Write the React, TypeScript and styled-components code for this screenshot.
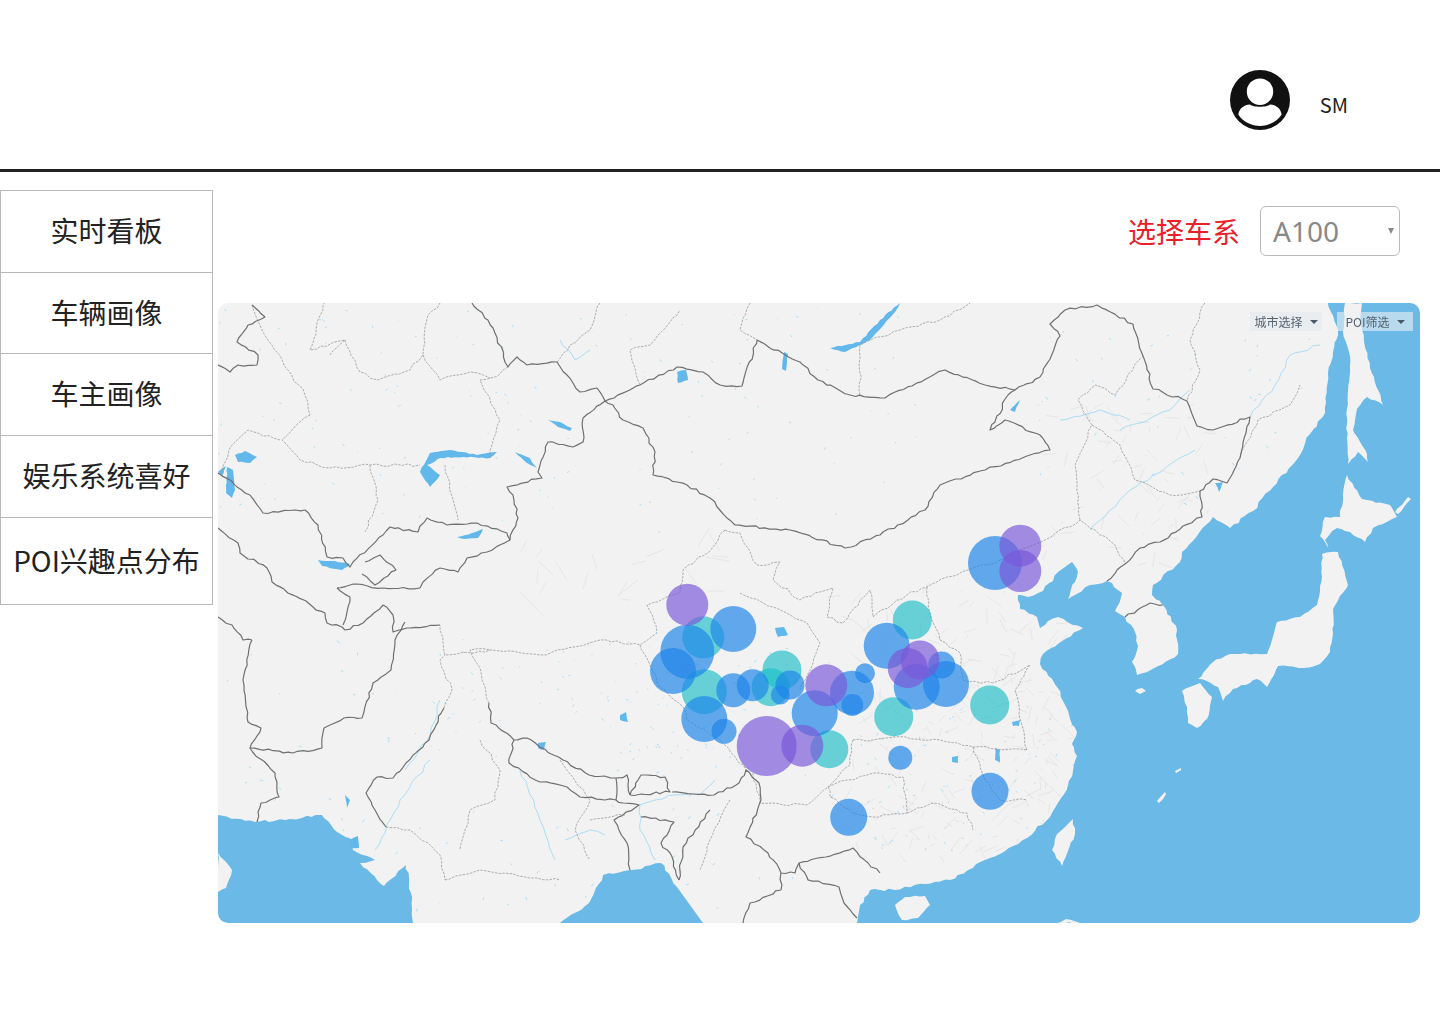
import styled, { createGlobalStyle } from "styled-components"

const GlobalStyle = createGlobalStyle`
    html, body {
        margin: 0;
        padding: 0;
        background: #fff;
        font-family: "Noto Sans CJK SC", "Noto Sans", sans-serif;
    }
`

const Page = styled.div`
    width: 1440px;
    height: 1024px;
    overflow: hidden;
`

const Header = styled.header`
    height: 169px;
    border-bottom: 3px solid #222;
    display: flex;
    align-items: center;
    justify-content: flex-end;
    gap: 30px;
    padding: 0 92px 0 0;
    box-sizing: content-box;
    margin-bottom: 18px;
`

const Avatar = styled.svg`
    width: 60px;
    height: 60px;
    margin-top: 31px;
`

const UserName = styled.span`
    font-size: 20px;
    color: #222;
    margin-top: 39px;
`

const Main = styled.div`
    display: flex;
`

const SideNav = styled.nav`
    width: 213px;
    flex-shrink: 0;
    display: flex;
    flex-direction: column;
`

const NavItem = styled.a<{ $height: number }>`
    height: ${(p) => p.$height}px;
    box-sizing: border-box;
    border: 1px solid #b8b8b8;
    border-top-width: 0;
    padding-bottom: 3px;
    display: flex;
    align-items: center;
    justify-content: center;
    font-size: 28px;
    color: #222;
    white-space: nowrap;

    &:first-child {
        border-top-width: 1px;
    }
`

const Content = styled.section`
    flex: 1;
    padding: 16px 20px 0 5px;
`

const FilterRow = styled.div`
    display: flex;
    align-items: center;
    justify-content: flex-end;
    gap: 20px;
    padding-right: 20px;
    margin-bottom: 47px;
`

const FilterLabel = styled.label`
    font-size: 28px;
    color: #e8202a;
    line-height: 50px;
`

const SelectBox = styled.div`
    position: relative;
    width: 140px;
    height: 50px;

    &::after {
        content: "";
        position: absolute;
        right: 6px;
        top: 22px;
        border-left: 3px solid transparent;
        border-right: 3px solid transparent;
        border-top: 6px solid #888;
    }
`

const Select = styled.select`
    appearance: none;
    width: 100%;
    height: 100%;
    box-sizing: border-box;
    border: 1px solid #bbb;
    border-radius: 6px;
    background: #fff;
    padding: 0 0 0 12px;
    font-family: "Noto Sans", sans-serif;
    font-size: 28px;
    color: #888;
`

const MapFrame = styled.div`
    position: relative;
    width: 1202px;
    height: 620px;
    border-radius: 10px;
    overflow: hidden;
    background: #f2f2f2;
`

const MapSvg = styled.svg`
    display: block;
    width: 1202px;
    height: 620px;
`

const MapControl = styled.div<{ $right: number; $width: number; $strong?: boolean }>`
    position: absolute;
    top: 9px;
    right: ${(p) => p.$right}px;
    width: ${(p) => p.$width}px;
    height: 19px;
    display: flex;
    align-items: center;
    justify-content: center;
    gap: 7px;
    font-size: 12px;
    color: #53616e;
    background: ${(p) => (p.$strong ? "rgba(236,240,244,.6)" : "rgba(228,233,238,.55)")};
    filter: blur(0.45px);

    &::after {
        content: "";
        border-left: 4.5px solid transparent;
        border-right: 4.5px solid transparent;
        border-top: 4.5px solid #4a5a68;
    }
`

const Sea = styled.polygon`
    fill: #6bb9e6;
`

const Land = styled.polygon`
    fill: #f2f2f2;
`

const Lake = styled.polygon`
    fill: #62b8ea;
`

const Line = styled.polyline<{ $kind: "border" | "region" | "river" | "road" }>`
    fill: none;
    stroke-linejoin: round;
    stroke: ${(p) =>
        p.$kind === "border" ? "#707070" : p.$kind === "region" ? "#9a9a9a" : p.$kind === "river" ? "#9ad5f5" : "#e2e2e2"};
    stroke-width: ${(p) => (p.$kind === "border" ? 1.2 : 0.8)};
    stroke-dasharray: ${(p) => (p.$kind === "region" ? "2.5 1.2" : "none")};
`

const Bubble = styled.circle<{ $tone: "blue" | "purple" | "teal" }>`
    fill: ${(p) => (p.$tone === "blue" ? "#1c85e9" : p.$tone === "purple" ? "#7a58d8" : "#20c0c8")};
    fill-opacity: 0.68;
`

const navItems = [
    { label: "实时看板", height: 83 },
    { label: "车辆画像", height: 81 },
    { label: "车主画像", height: 82 },
    { label: "娱乐系统喜好", height: 82 },
    { label: "POI兴趣点分布", height: 87 },
]

const seas = [
    // yellow sea, east china sea, sea of japan, pacific
    "1328,303 1338,330 1333,352 1328,373 1325,413 1310,434 1295,462 1273,487 1253,511 1230,528 1213,517 1197,536 1182,552 1180,562 1153,585 1152,595 1163,605 1177,630 1178,654 1163,664 1137,675 1132,662 1138,646 1135,632 1125,617 1115,611 1122,593 1112,583 1107,581 1090,585 1068,599 1078,572 1072,562 1058,572 1043,591 1028,597 1018,595 1020,609 1037,617 1040,628 1058,617 1083,628 1067,638 1043,654 1040,664 1057,687 1068,711 1077,732 1072,744 1077,756 1068,785 1050,817 1027,838 1000,854 985,860 950,880 925,884 895,890 870,890 860,905 857,923 1420,923 1420,303",
    // arabian sea
    "218,815 255,822 290,819 322,815 337,832 353,840 353,850 375,860 360,863 384,886 406,865 411,893 413,923 218,923",
    // bay of bengal
    "560,923 589,903 603,875 630,870 661,863 677,887 703,923",
]

const islands = [
    "1345,303 1362,303 1360,320 1370,368 1383,405 1367,397 1357,409 1353,430 1367,454 1368,462 1358,452 1348,464 1347,438 1347,409 1350,356 1343,332",
    "1347,475 1362,499 1390,505 1397,517 1373,528 1365,542 1350,532 1337,528 1325,540 1328,548 1320,536 1325,517 1340,517 1343,495",
    "1322,554 1338,552 1348,585 1333,609 1333,634 1330,652 1320,664 1303,668 1278,666 1267,687 1257,679 1250,683 1233,689 1223,701 1218,687 1207,681 1198,679 1213,662 1230,654 1267,654 1277,622 1300,617 1317,605 1322,577",
    "1182,691 1200,683 1212,697 1207,719 1197,728 1188,723 1187,707",
    "1073,819 1075,834 1062,866 1052,850 1057,834",
    "895,905 905,897 925,896 930,905 918,918 902,920",
    "1058,923 1066,919 1080,923",
    "1135,691 1142,688 1146,691 1140,694",
    "218,853 232,870 226,888 218,892",
    "1395,512 1408,497 1411,499 1398,514",
    "1157,801 1165,792 1166,794 1159,803",
    "1175,771 1181,768 1181,770 1176,773",
]

const lakes = [
    "420,472 430,453 450,450 477,455 497,452 490,458 463,457 440,458 427,465 440,475 430,487 423,477",
    "515,452 530,458 537,468 527,463",
    "548,420 560,422 572,428 570,431 558,427",
    "457,537 472,533 483,529 478,538 465,539",
    "227,467 233,470 235,490 232,498 226,493",
    "235,455 245,451 257,457 250,463 238,462",
    "218,472 226,466 222,476",
    "830,348 860,342 880,320 900,303 895,312 870,340 845,352",
    "677,372 686,370 688,380 678,383",
    "784,352 788,354 786,371 782,369",
    "775,628 784,627 788,635 778,637",
    "1010,410 1020,400 1015,412",
    "1215,483 1223,482 1219,492",
    "995,748 1000,750 1000,762 995,760",
    "952,757 958,756 958,763 952,762",
    "1012,722 1020,720 1019,726 1013,726",
    "318,560 335,561 350,564 342,570 322,566",
    "345,795 350,800 347,808",
    "350,840 358,836 359,848 352,848",
    "538,743 546,742 544,750 538,748",
    "620,715 626,712 628,722 620,720",
]

const borders = [
    "218,365 230,372 238,365 257,365 258,355 237,342 248,325 265,317 252,305",
    "472,303 493,328 508,367 517,357 527,365 557,362 567,375 580,392 597,388 605,401 640,385 677,367 703,372 720,385 742,386 757,340 800,362 818,380 850,395 885,398 945,370 985,385 1015,390 1040,377 1060,336 1050,324 1065,310 1097,305 1133,324 1143,356 1153,389 1187,401 1197,426 1213,430 1250,417 1240,458 1227,483 1213,479 1200,491 1202,517 1183,526 1160,542 1140,548 1125,564 1107,581",
    "605,401 613,405 623,420 643,428 655,452 653,475 687,485 710,498 735,525 790,530 845,548 880,535 925,510 940,485 985,470 1030,455 1050,450 1040,435 1005,420 990,430 1008,395 1015,390",
    "605,401 583,418 583,442 573,447 548,442 538,472 542,478 507,487 513,495 518,518 510,540 487,552 467,558 458,572 440,568 423,582 420,588",
    "510,540 507,533 477,523 447,525 427,518 418,532 390,527 383,535 353,562 350,567 343,558 327,557 318,525 305,510 263,513 250,495 218,473",
    "218,528 238,543 240,553 267,568 272,582 313,607 325,613 327,623 342,627 345,630 363,623 383,605 393,615 393,632 407,628 440,625",
    "337,588 350,597 343,625",
    "337,588 357,584 383,588 420,588",
    "365,562 380,555 396,570 375,585 362,574",
    "252,640 243,680 248,722 261,728 250,748 293,753 322,748 324,728 344,718 362,718 373,683 391,670 395,640 405,622",
    "218,617 232,625 243,640 252,640",
    "250,748 275,773 279,797 261,803 257,822",
    "444,708 429,740 406,763 393,778 377,777 366,793 375,810 386,827",
    "489,703 491,723 514,740 527,738 563,760 589,775 616,778 627,775 630,795",
    "514,740 509,763 540,782 567,787 580,797 616,800 616,778",
    "630,795 641,775 665,777 670,792 630,795",
    "616,800 623,803 639,805 614,820 627,843 630,870",
    "641,817 674,822 661,843 670,853 679,880",
    "672,792 714,795 739,783 746,770 759,783 761,800 746,837 768,853 781,873 795,873 799,863 826,857 853,848 871,867 880,873",
    "710,810 683,847 679,880",
    "781,873 781,890 750,903 743,923",
    "799,863 808,880 839,887 844,903 857,918",
    "1125,617 1150,603 1163,605",
]

const regions = [
    "725,530 713,547 683,570 680,592 647,605 657,633 640,645 600,640 540,655 490,650 445,655 440,625",
    "640,645 660,687 683,707 687,720 720,740 746,770",
    "740,593 773,607 807,623 820,643 813,663 800,690",
    "725,530 740,533 757,565 780,562 773,580 800,600 833,588 827,617 843,623 860,600 870,590 873,617 907,595 927,587 947,577 968,570 1000,560",
    "927,587 930,613 940,640 960,653 963,680 993,683 1030,665",
    "853,740 873,740 893,737 940,740 973,747 1027,750",
    "828,787 847,780 873,773 903,777 907,813 873,817 853,813 830,797 828,787",
    "907,813 933,803 967,813 973,830",
    "753,773 760,803 807,805 828,787",
    "853,740 850,765 828,787",
    "973,747 985,780 1000,800 1027,800",
    "1027,750 1015,690 1030,665",
    "1000,560 1045,540 1080,520 1115,545 1125,564",
    "1080,520 1075,465 1092,425 1120,445 1135,480 1170,495 1200,491",
    "1092,425 1078,400 1095,385 1115,395 1143,356",
    "444,708 452,690 440,660 445,655",
    "489,703 480,668 470,650 490,650",
    "252,305 262,330 305,395 310,415",
    "310,415 292,430 282,440 300,460 330,468 370,465 420,465",
    "280,440 248,430 232,445 222,470",
    "370,465 378,500 365,532",
    "445,465 458,520",
    "490,458 492,445 500,420 480,380 498,376 508,367",
    "330,355 345,340 310,350 325,300",
    "345,340 360,372 378,380 410,370 423,355 428,315 440,303",
    "423,355 440,380 470,372 490,378",
    "600,303 590,330 570,345 557,362",
    "640,385 630,350 650,345 680,310",
    "750,303 740,330 757,340",
    "860,395 860,345 900,330 940,320 970,303",
    "1205,303 1190,340 1200,370 1187,401",
    "1240,458 1258,420 1290,405 1300,385",
    "386,827 410,830 440,855 445,880",
    "445,880 480,870 530,878 560,880",
    "480,740 500,770 495,800 470,810 465,830 460,850",
    "560,760 590,800 575,830 590,860",
    "590,820 625,815",
    "730,800 710,840 700,870",
]

const rivers = [
    "639,805 655,800 675,795 700,795 715,780",
    "640,805 640,830 655,860",
    "430,760 400,800 375,850",
    "440,700 430,735 405,770",
    "520,770 540,820 555,860",
    "565,840 590,830 605,835",
    "1250,417 1275,385 1290,355 1320,345",
    "1120,430 1170,410 1190,390",
    "1090,530 1130,490 1195,450",
    "560,340 575,360 590,350",
    "1060,420 1100,410 1130,420",
]

const bubbles: [number, number, number, "blue" | "purple" | "teal"][] = [
    [703.3, 637.3, 21, "teal"],
    [704.3, 691.7, 22.5, "teal"],
    [782, 670, 19.5, "teal"],
    [770.7, 687.3, 19, "teal"],
    [829.3, 749.3, 19, "teal"],
    [912.3, 620, 19.5, "teal"],
    [893.7, 716.7, 19.5, "teal"],
    [989.7, 705, 19.5, "teal"],
    [733.3, 629, 23, "blue"],
    [687.3, 651.7, 27, "blue"],
    [673, 671, 23, "blue"],
    [733.3, 690.3, 17, "blue"],
    [752.7, 685.3, 16, "blue"],
    [790, 685, 14.5, "blue"],
    [780.3, 695, 9.5, "blue"],
    [704.3, 719, 23, "blue"],
    [724, 731.3, 12.5, "blue"],
    [814.7, 713.3, 23, "blue"],
    [852, 692.7, 22, "blue"],
    [852.3, 705, 11, "blue"],
    [865, 673.3, 10, "blue"],
    [886.7, 645.7, 23, "blue"],
    [916.7, 686.7, 23, "blue"],
    [946, 684, 23, "blue"],
    [941.7, 665, 13.5, "blue"],
    [900.3, 757.7, 12, "blue"],
    [995, 563, 27, "blue"],
    [990, 791.3, 18.5, "blue"],
    [848.7, 817.3, 18.5, "blue"],
    [687.3, 604.7, 21, "purple"],
    [766.7, 746, 30, "purple"],
    [802.3, 745.7, 21, "purple"],
    [826.3, 685.3, 21, "purple"],
    [1020.3, 545.7, 21, "purple"],
    [1020.3, 571, 21, "purple"],
    [907.7, 668, 20, "purple"],
    [920, 660, 19.5, "purple"],
]

// fixed pseudo random numbers, so the picture stays the same on every load
const randomFrom = (seed: number) => {
    let s = seed
    return () => {
        s = (s * 16807) % 2147483647
        return s / 2147483647
    }
}

const scatter = (count: number, x0: number, y0: number, w: number, h: number, len: number, seed: number) => {
    const next = randomFrom(seed)
    const out: string[] = []
    for (let i = 0; i < count; i++) {
        const x = x0 + next() * w
        const y = y0 + next() * h
        const dx = (next() - 0.5) * len
        const dy = (next() - 0.5) * len
        out.push(`${x.toFixed(1)},${y.toFixed(1)} ${(x + dx).toFixed(1)},${(y + dy).toFixed(1)}`)
    }
    return out
}

// breaks a hand traced line into short wobbly pieces so coasts and borders look less straight
const rough = (points: string, amp: number, step: number, seed: number, closed = false) => {
    const next = randomFrom(seed * 131 + 7)
    const pts = points.split(" ").map((p) => p.split(",").map(Number))
    if (closed) pts.push(pts[0])
    const out: string[] = [pts[0].join(",")]
    for (let i = 1; i < pts.length; i++) {
        const [ax, ay] = pts[i - 1]
        const [bx, by] = pts[i]
        const n = Math.max(1, Math.round(Math.hypot(bx - ax, by - ay) / step))
        for (let k = 1; k < n; k++) {
            const x = ax + ((bx - ax) * k) / n + (next() - 0.5) * amp * 2
            const y = ay + ((by - ay) * k) / n + (next() - 0.5) * amp * 2
            out.push(`${x.toFixed(1)},${y.toFixed(1)}`)
        }
        out.push(`${bx},${by}`)
    }
    return out.join(" ")
}

const roughSeas = seas.map((p, i) => {
    const pts = p.split(" ")
    // the last corners sit on the frame, keep them straight
    const edge = i === 0 ? 3 : 1
    return rough(pts.slice(0, -edge).join(" "), 1.3, 5, i + 1) + " " + pts.slice(-edge).join(" ")
})
const roughIslands = islands.map((p, i) => rough(p, 0.9, 5, i + 20, true))
const roughLakes = lakes.map((p, i) => rough(p, 0.6, 4, i + 40, true))
const roughBorders = borders.map((p, i) => rough(p, 1.2, 5, i + 70))
const roughRegions = regions.map((p, i) => rough(p, 1.4, 6, i + 100))
const roughRivers = rivers.map((p, i) => rough(p, 1.4, 7, i + 150))

const roads = [
    ...scatter(240, 840, 590, 240, 270, 30, 11),
    ...scatter(70, 1040, 400, 170, 170, 30, 23),
    ...scatter(20, 520, 540, 250, 60, 50, 37),
]

const specks = [
    ...scatter(130, 218, 303, 700, 230, 5, 5),
    ...scatter(90, 440, 640, 300, 120, 4, 7),
    ...scatter(110, 218, 640, 620, 280, 6, 13),
    ...scatter(120, 860, 700, 220, 150, 5, 17),
    ...scatter(50, 1040, 330, 290, 180, 6, 19),
]

export default function App() {
    return (
        <Page>
            <GlobalStyle />
            <Header>
                <Avatar viewBox="0 0 60 60">
                    <circle cx="30" cy="30" r="30" fill="#111" />
                    <circle cx="30" cy="21.7" r="13.2" fill="#fff" />
                    <path
                        d="M8.3 44.5C9.5 38 14 35 20 34.5C23 37.5 37 37.5 40 34.5C46 35 50.5 38 51.7 44.5C47 52 38 56 30 56C22 56 13 52 8.3 44.5Z"
                        fill="#fff"
                    />
                </Avatar>
                <UserName>SM</UserName>
            </Header>
            <Main>
                <SideNav>
                    {navItems.map((item) => (
                        <NavItem key={item.label} $height={item.height}>
                            {item.label}
                        </NavItem>
                    ))}
                </SideNav>
                <Content>
                    <FilterRow>
                        <FilterLabel>选择车系</FilterLabel>
                        <SelectBox>
                            <Select defaultValue="A100">
                                <option>A100</option>
                            </Select>
                        </SelectBox>
                    </FilterRow>
                    <MapFrame>
                        <MapSvg viewBox="218 303 1202 620">
                            <defs>
                                <filter id="soft" x="0" y="0" width="1" height="1">
                                    <feGaussianBlur stdDeviation="0.6" />
                                </filter>
                            </defs>
                            <g filter="url(#soft)">
                                {roads.map((p, i) => (
                                    <Line key={i} $kind="road" points={p} />
                                ))}
                                {specks.map((p, i) => (
                                    <Line key={i} $kind="river" points={p} />
                                ))}
                                {roughRivers.map((p) => (
                                    <Line key={p} $kind="river" points={p} />
                                ))}
                                {roughSeas.map((p) => (
                                    <Sea key={p} points={p} />
                                ))}
                                {roughIslands.map((p) => (
                                    <Land key={p} points={p} />
                                ))}
                                {roughLakes.map((p) => (
                                    <Lake key={p} points={p} />
                                ))}
                                {roughRegions.map((p) => (
                                    <Line key={p} $kind="region" points={p} />
                                ))}
                                {roughBorders.map((p) => (
                                    <Line key={p} $kind="border" points={p} />
                                ))}
                                {bubbles.map(([cx, cy, r, tone]) => (
                                    <Bubble key={`${cx}-${cy}`} cx={cx} cy={cy} r={r} $tone={tone} />
                                ))}
                            </g>
                        </MapSvg>
                        <MapControl $right={98} $width={72}>
                            城市选择
                        </MapControl>
                        <MapControl $right={7} $width={76} $strong>
                            POI筛选
                        </MapControl>
                    </MapFrame>
                </Content>
            </Main>
        </Page>
    )
}
